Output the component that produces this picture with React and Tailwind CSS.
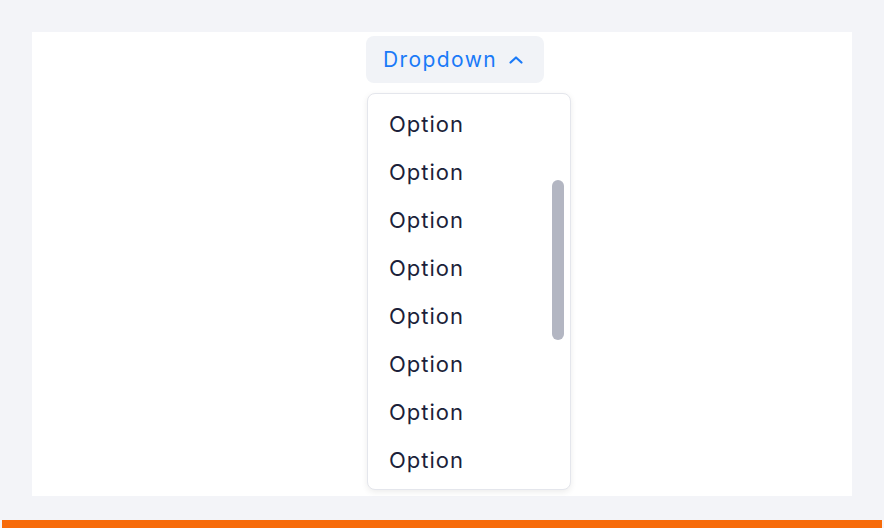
const OPTIONS = Array.from({ length: 8 }, () => "Option");

export default function App() {
  return (
    <div className="w-[884px] h-[528px] bg-[#f3f4f8] flex flex-col" style={{ fontFamily: "Inter, 'Noto Sans', sans-serif" }}>
      <div className="flex-1 pt-8 px-8 pb-6">
        <div className="h-[464px] bg-white flex flex-col items-center pt-1">
          <button className="ml-[26px] h-[47px] w-[178px] rounded-lg bg-[#f1f3f7] flex items-center pl-[17px] gap-[10px] text-[21px] tracking-[1.4px] text-[#1a7af8]">
            Dropdown
            <svg width="18" height="18" viewBox="0 0 18 18" fill="none" stroke="currentColor" strokeWidth="2.2" strokeLinecap="round" strokeLinejoin="round">
              <path d="M3.5 11.5 L9 6.5 L14.5 11.5" />
            </svg>
          </button>
          <div className="mt-[10px] ml-[54px] w-[204px] h-[397px] bg-white border border-[#e4e6ec] rounded-lg shadow-[0_2px_6px_rgba(0,0,0,0.08)] flex pt-[6px]">
            <div className="flex-1 flex flex-col">
              {OPTIONS.map((o, i) => (
                <div key={i} className="h-12 flex items-center pl-[21px] text-[22px] tracking-[1px] text-[#1c1f3a]">{o}</div>
              ))}
            </div>
            <div className="w-[12px] mr-[6px] pt-[80px]">
              <div className="h-[160px] rounded-full bg-[#b3b6c2]" />
            </div>
          </div>
        </div>
      </div>
      <div className="h-2 mx-[2px] bg-[#f76b0a]" />
    </div>
  );
}
